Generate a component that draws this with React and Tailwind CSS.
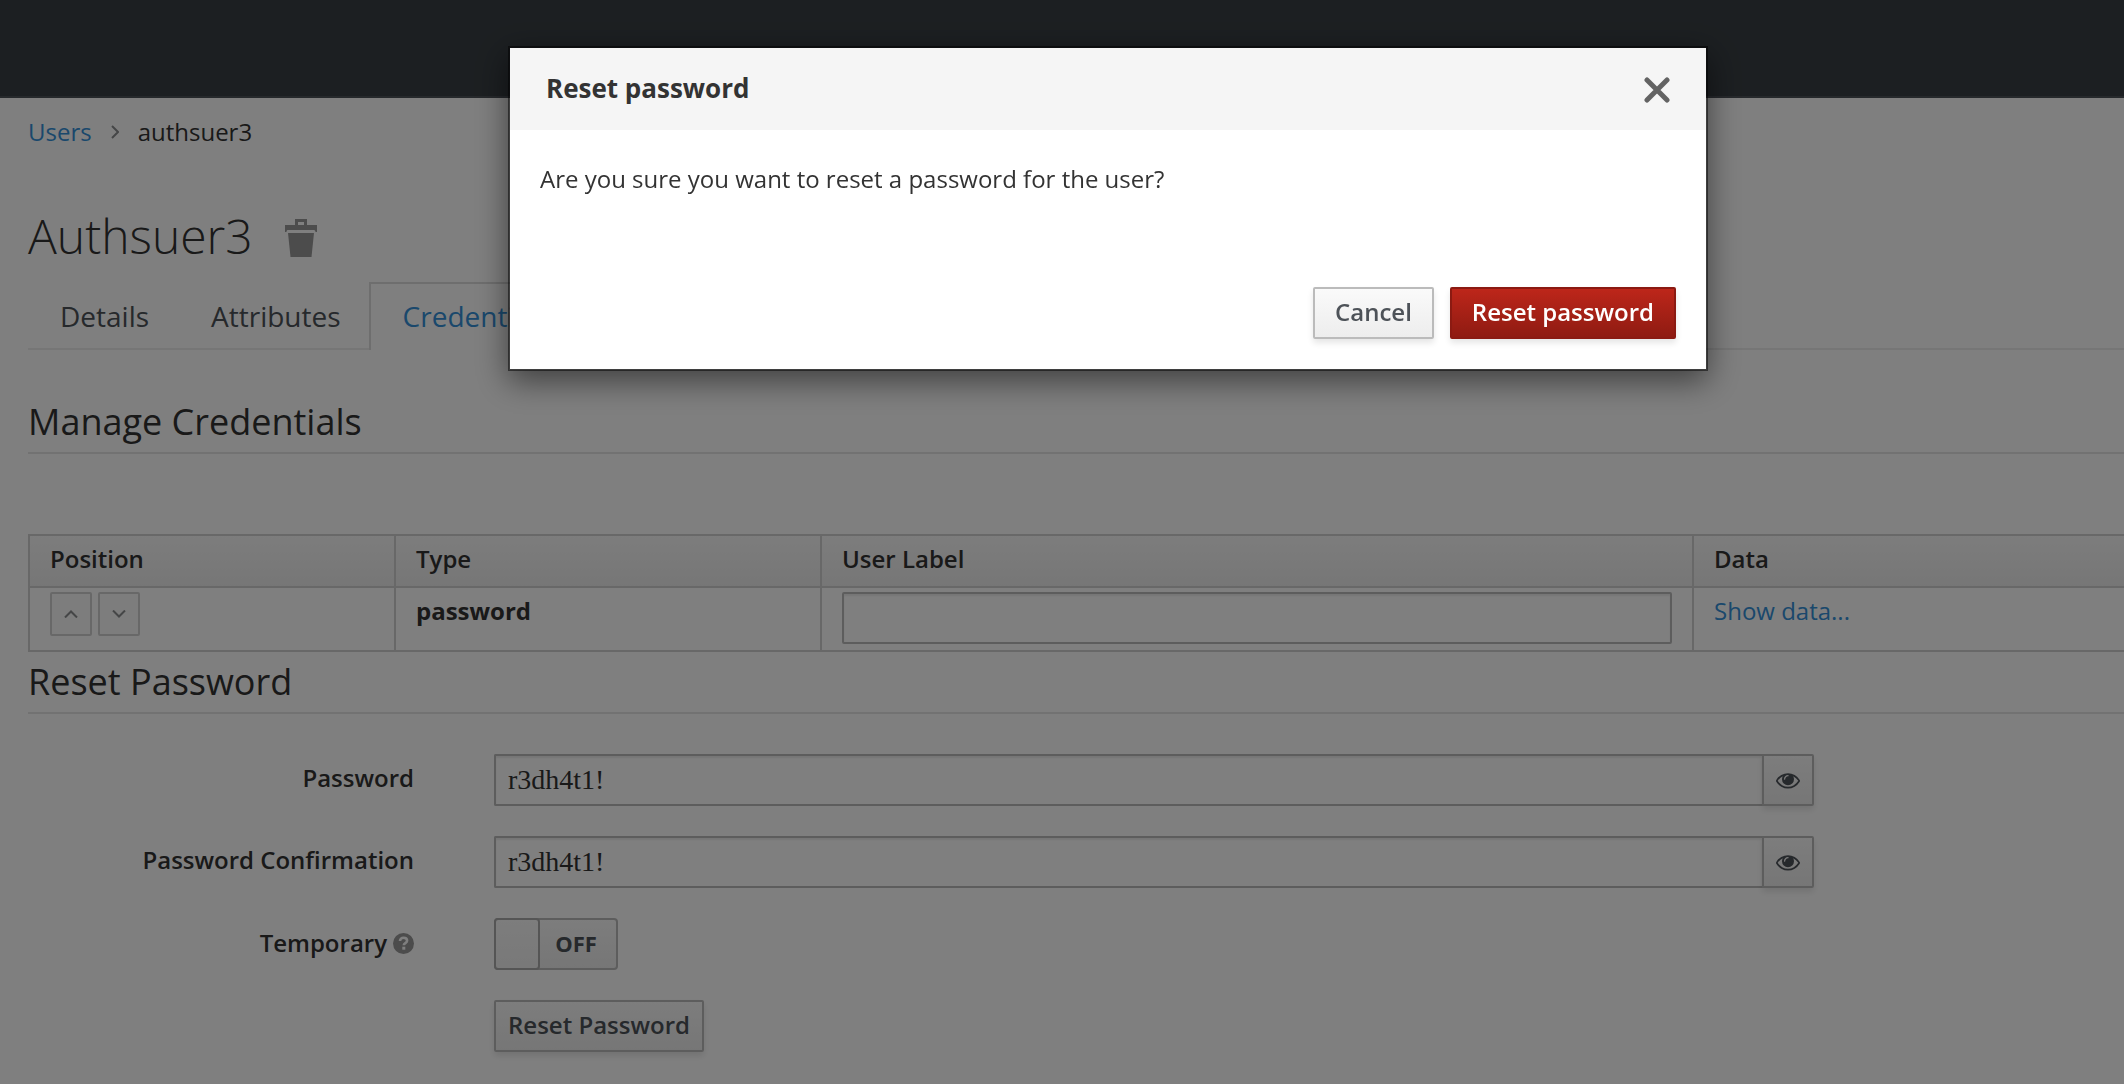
import React from "react";

function ChevronRight() {
  return (
    <svg width="8" height="14" viewBox="0 0 8 14" fill="none" stroke="#8b8d8f" strokeWidth="2" aria-hidden="true">
      <path d="M1 1l6 6-6 6" />
    </svg>
  );
}

function TrashIcon() {
  return (
    <svg width="32" height="38" viewBox="0 0 32 38" fill="#999" aria-hidden="true">
      <path fillRule="evenodd" d="M10 6V0h12v6h10v7h-1.500c0-1.500-1-2-2-2H3.500c-1.500 0-2 .5-2 2H0V6zm3 0h6V3h-6z" />
      <path d="M3 14h26L26.500 38H5.500z" />
    </svg>
  );
}

function Caret({ up }) {
  return (
    <svg width="14" height="8" viewBox="0 0 14 8" fill="none" stroke="#8b8d8f" strokeWidth="2" aria-hidden="true">
      <path d={up ? "M1 7.500l6-6 6 6" : "M1 .5l6 6 6-6"} />
    </svg>
  );
}

function EyeIcon() {
  return (
    <svg width="24" height="24" viewBox="0 -1536 1792 1792" fill="#4d5258" aria-hidden="true">
      <path transform="scale(1 -1)" d="M1664 576q-152 236-381 353 61-104 61-225 0-185-131.500-316.500T896 256 579.500 387.500 448 704q0 121 61 225-229-117-381-353 133-205 333.500-326.500T896 128t434.500 121.500T1664 576zM944 960q0 20-14 34t-34 14q-125 0-214.500-89.500T592 704q0-20 14-34t34-14 34 14 14 34q0 86 61 147t147 61q20 0 34 14t14 34zm848-384q0-34-20-69-140-230-376.500-368.500T896 0 396.500 139 20 507Q0 542 0 576t20 69q140 229 376.500 368T896 1152t499.500-139T1772 645q20-35 20-69z" />
    </svg>
  );
}

function HelpIcon() {
  return (
    <svg width="21" height="21" viewBox="0 0 21 21" aria-hidden="true">
      <circle cx="10.500" cy="10.500" r="10.500" fill="#999" />
      <path d="M7 8c0-2 1.500-3.200 3.500-3.200s3.600 1.200 3.600 3c0 2.400-3.300 2.300-3.300 4.500" fill="none" stroke="#fff" strokeWidth="2.600" />
      <rect x="9.300" y="13.700" width="3" height="3" fill="#fff" />
    </svg>
  );
}

function SectionTitle({ children, className }) {
  return (
    <h2 className={`border-b-2 border-[#e5e5e5] pb-[10px] text-[36px] leading-[40px] ${className}`}>{children}</h2>
  );
}

function PasswordRow({ id, label }) {
  return (
    <div className="flex gap-20">
      <label htmlFor={id} className="w-[386px] shrink-0 pt-1 text-right font-semibold">{label}</label>
      <div className="flex max-w-[1320px] flex-1">
        <input
          id={id}
          defaultValue="r3dh4t1!"
          className="h-[52px] min-w-0 flex-1 rounded-l-[2px] border-2 border-r-0 border-[#bbb] bg-white px-3 font-['Liberation_Serif',serif] text-[28px] shadow-[inset_0_2px_2px_rgba(0,0,0,0.075)]"
        />
        <button
          type="button"
          aria-label={`Show ${label}`}
          className="flex h-[52px] w-[52px] items-center justify-center rounded-r-[2px] border-2 border-[#bbb] bg-linear-to-b from-[#fafafa] to-[#ededed] shadow-[0_4px_6px_rgba(3,3,3,0.1)]"
        >
          <EyeIcon />
        </button>
      </div>
    </div>
  );
}

const th = "h-[52px] border-2 border-[#d1d1d1] px-5 pb-1 text-left font-semibold";
const td = "border-2 border-[#d1d1d1] px-5 pt-1 pb-[6px] align-top leading-[38px]";
const move = "flex h-11 w-[42px] items-center justify-center rounded-[2px] border-2 border-[#d1d1d1] bg-[#fafafa]";

export default function App() {
  return (
    <div className="min-h-screen overflow-x-hidden bg-white font-['Open_Sans',sans-serif] text-[24px] leading-[40px] text-[#333]">
      <header className="h-[98px] border-b-2 border-[#4d5258] bg-[#393f44]" />

      <main className="pb-4 pl-7">
        <nav aria-label="Breadcrumb" className="flex items-center gap-[19px] pt-[14px]">
          <a href="#users" className="text-[#3590d8]">Users</a>
          <ChevronRight />
          <span>authsuer3</span>
        </nav>

        <div className="flex items-center gap-8 pt-[52px]">
          <h1 className="text-[48px] leading-[64px] font-light">Authsuer3</h1>
          <button type="button" aria-label="Delete user" className="pt-1"><TrashIcon /></button>
        </div>

        <div className="flex pt-[14px] text-[28px] text-[#4d5258]">
          <a href="#details" className="border-b-2 border-[#ededed] px-8 pt-[14px] pb-3">Details</a>
          <a href="#attributes" className="border-b-2 border-[#ededed] pr-7 pl-[30px] pt-[14px] pb-3">Attributes</a>
          <a href="#credentials" className="border-2 border-b-0 border-[#ddd] px-8 pt-3 pb-3 text-[#3590d8]">Credentials</a>
          <span className="flex-1 border-b-2 border-[#ededed]" />
        </div>

        <SectionTitle className="pt-[52px]">Manage Credentials</SectionTitle>

        <table className="mt-20 w-full table-fixed border-collapse">
          <colgroup>
            <col className="w-[366px]" />
            <col className="w-[426px]" />
            <col />
            <col className="w-[431px]" />
          </colgroup>
          <thead>
            <tr className="bg-linear-to-b from-[#fafafa] to-[#ededed]">
              <th className={th}>Position</th>
              <th className={th}>Type</th>
              <th className={th}>User Label</th>
              <th className={`${th} border-r-0`}>Data</th>
            </tr>
          </thead>
          <tbody>
            <tr>
              <td className={td}>
                <div className="flex gap-[6px]">
                  <button type="button" aria-label="Move up" className={move}><Caret up /></button>
                  <button type="button" aria-label="Move down" className={move}><Caret /></button>
                </div>
              </td>
              <td className={`${td} font-bold`}>password</td>
              <td className={td}>
                <input aria-label="User Label" className="block h-[52px] w-full rounded-[2px] border-2 border-[#bbb] bg-white px-3 shadow-[inset_0_2px_2px_rgba(0,0,0,0.075)]" />
              </td>
              <td className={`${td} border-r-0`}><a href="#data" className="text-[#3590d8]">Show data...</a></td>
            </tr>
          </tbody>
        </table>

        <SectionTitle className="pt-[10px]">Reset Password</SectionTitle>

        <form className="mt-10 flex flex-col gap-[30px]">
          <PasswordRow id="password" label="Password" />
          <PasswordRow id="confirmation" label="Password Confirmation" />
          <div className="flex gap-20">
            <div className="flex w-[386px] shrink-0 items-center justify-end gap-[6px] pb-[2px]">
              <label htmlFor="temporary" className="font-semibold">Temporary</label>
              <HelpIcon />
            </div>
            <label className="relative flex h-[52px] w-[124px] rounded-[4px] border-2 border-[#bbb] bg-linear-to-b from-[#fafafa] to-[#ededed]">
              <input id="temporary" type="checkbox" role="switch" className="absolute inset-0 appearance-none" />
              <span className="-m-[2px] w-[46px] rounded-[4px] border-2 border-[#aaa] bg-linear-to-b from-[#fafafa] to-[#f2f2f2]" />
              <span className="flex flex-1 items-center justify-center pr-[2px] pb-[2px] text-[22px] font-bold text-[#4d5258]">OFF</span>
            </label>
          </div>
          <button type="button" className="ml-[466px] h-[52px] self-start rounded-[2px] border-2 border-[#bbb] bg-linear-to-b from-[#fafafa] to-[#ededed] px-3 pb-[2px] font-semibold text-[#4d5258] shadow-[0_4px_6px_rgba(3,3,3,0.1)]">
            Reset Password
          </button>
        </form>
      </main>

      <div className="fixed inset-0 bg-black/50 pt-[46px] pl-[92px]">
        <div role="dialog" aria-modal="true" aria-labelledby="dialog-title" className="mx-auto w-full max-w-[1200px] border-2 border-black/50 bg-white bg-clip-padding shadow-[0_10px_30px_rgba(0,0,0,0.5)]">
          <div className="flex h-[82px] items-center justify-between bg-[#f5f5f5] px-9">
            <h4 id="dialog-title" className="pb-[2px] text-[26px] font-bold">Reset password</h4>
            <button type="button" aria-label="Close" className="pt-[2px]">
              <svg width="26" height="26" viewBox="0 0 26 26" stroke="#636363" strokeWidth="5" strokeLinecap="round" aria-hidden="true">
                <path d="M3 3l20 20M23 3L3 23" />
              </svg>
            </button>
          </div>
          <p className="px-[30px] pt-[29px]">Are you sure you want to reset a password for the user?</p>
          <div className="flex justify-end gap-4 px-[30px] pt-[88px] pb-[30px] font-semibold">
            <button type="button" className="h-[52px] rounded-[2px] border-2 border-[#bbb] bg-linear-to-b from-[#fafafa] to-[#ededed] px-5 pb-[2px] text-[#4d5258] shadow-[0_4px_6px_rgba(3,3,3,0.1)]">Cancel</button>
            <button type="button" className="h-[52px] rounded-[2px] border-2 border-[#8b1a12] bg-linear-to-b from-[#bd261a] to-[#8f1b12] px-5 pb-[2px] text-white shadow-[0_4px_6px_rgba(3,3,3,0.1)]">Reset password</button>
          </div>
        </div>
      </div>
    </div>
  );
}
